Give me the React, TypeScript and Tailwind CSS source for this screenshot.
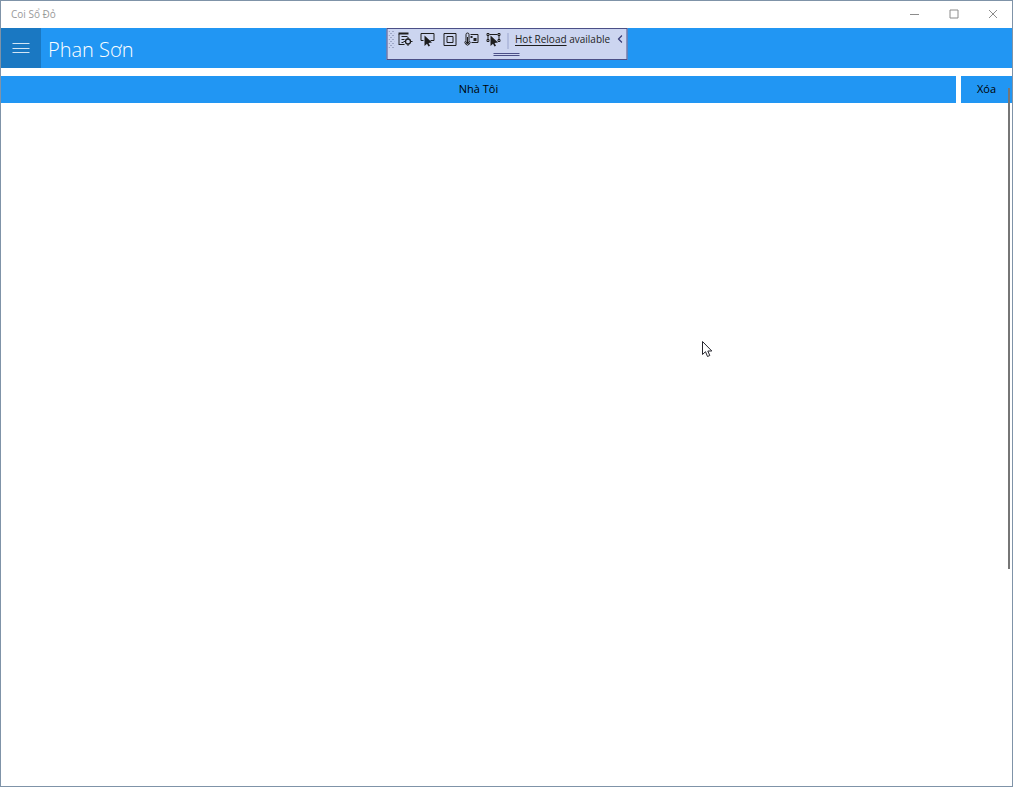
import { ComponentType, PropsWithChildren } from "react";

export default function App() {
  return (
    <div className="relative flex min-h-screen flex-col border border-[#7f93a8] bg-white font-['Open_Sans','Noto_Sans',sans-serif] text-black">
      <TitleBar />
      <NavigationBar />

      <main className="relative flex grow flex-col pt-2">
        {people.map((name) => (
          <PersonRow key={name} name={name} />
        ))}
        <div className="absolute top-5 right-0.5 h-[67%] w-0.5 bg-[#767676]" />
      </main>

      <DebugToolbar />
      <Cursor />
    </div>
  );
}

const TitleBar = () => (
  <header className="flex h-[27px] items-center justify-between pl-2.5">
    <span className="pb-0.5 text-[10px] leading-4 text-[#999999]">Coi Sổ Đỏ</span>

    <div className="flex text-[#8c8c8c]">
      {windowControls.map(({ label, path }) => (
        <button
          key={label}
          aria-label={label}
          className="flex h-[27px] w-[39px] items-center justify-center pb-0.5"
        >
          <svg
            width="10"
            height="10"
            viewBox="0 0 10 10"
            fill="none"
            stroke="currentColor"
          >
            <path d={path} />
          </svg>
        </button>
      ))}
    </div>
  </header>
);

const NavigationBar = () => (
  <nav className="flex h-10 items-center bg-[#2196f3]">
    <button
      aria-label="Menu"
      className="flex size-10 items-center justify-center bg-[#1a78c2] text-[#d3e6f5]"
    >
      <svg width="18" height="12" viewBox="0 0 18 12" stroke="currentColor">
        <path d="M0.5 1.5h17M0.5 6.5h17M0.5 10.5h17" />
      </svg>
    </button>
    <h1 className="pt-1 pl-[7px] text-xl font-light text-white">Phan Sơn</h1>
  </nav>
);

const PersonRow = ({ name }: { name: string }) => (
  <div className="flex h-[27px] gap-[5px] text-[11px]">
    <button className="grow bg-[#2196f3]">{name}</button>
    <button className="w-[51px] bg-[#2196f3]">Xóa</button>
  </div>
);

const DebugToolbar = () => (
  <div className="absolute top-[27px] left-1/2 flex h-8 w-[241px] -translate-x-1/2 border border-[#4b4f87] bg-[#ccd5f0] text-[#1e1e1e]">
    <svg className="mt-0.5 ml-px" width="6" height="18" viewBox="0 0 6 18">
      <defs>
        <pattern id="grip" width="4" height="4" patternUnits="userSpaceOnUse">
          <path d="M0 0h1v1H0zM2 2h1v1H2z" fill="#6f789c" />
        </pattern>
      </defs>
      <rect width="6" height="18" fill="url(#grip)" />
    </svg>

    <div className="ml-[3px] flex h-5 items-center gap-1.5">
      <ToolButton label="Go to Live Visual Tree">
        <path d="M1 2.5h10" strokeWidth="2" />
        <path d="M1.5 3v11M4 5.5h6M4 8.5h3M4 11.5h2M1.5 13.5H7" />
        <circle cx="10.5" cy="10.5" r="2.5" strokeWidth="1.3" />
        <path d="M10.5 6v2M10.5 13v2M6 10.5h2M13 10.5h2" />
      </ToolButton>
      <ToolButton label="Select Element">
        <path d="M4 9.5H1.5v-7h13v7H11" />
        <path d="M5 4.5V15l2.5-2.3L9 15.5l1.5-.8L9 12l3.5-.5z" fill="currentColor" stroke="none" />
      </ToolButton>
      <ToolButton label="Display Layout Adorners">
        <path d="M2.5 2.5h12v12h-12zM5.5 5.5h6v6h-6z" />
      </ToolButton>
      <ToolButton label="Track Focused Element">
        <path d="M2.5 9.5v-6a1.5 1.5 0 0 1 3 0v6a2.5 2.5 0 1 1-3 0z" />
        <path d="M4 6v5" />
        <circle cx="4" cy="11.5" r="1.5" fill="currentColor" stroke="none" />
        <path d="M7 3.5h7.5v8H8" />
        <path d="M7 5h2v2H7zM10 7h3v3h-3z" fill="currentColor" stroke="none" />
      </ToolButton>
      <ToolButton label="Preview Selection">
        <path d="M4 3.5h8M2.5 5v3M13.5 5v3" />
        <path d="M1.5 2.5h2v2h-2zM12.5 2.5h2v2h-2zM1.5 8.5h2v2h-2zM12.5 8.5h2v2h-2z" />
        <path d="M5 4.5V15l2.5-2.3L9 15.5l1.5-.8L9 12l3.5-.5z" fill="currentColor" stroke="none" />
      </ToolButton>
    </div>

    <div className="mt-1 ml-1.5 h-4 w-px bg-[#9aa5cd]" />
    <p className="ml-[7px] text-[10px] leading-5 whitespace-nowrap">
      <a href="#hot-reload" className="underline underline-offset-2">
        Hot Reload
      </a>{" "}
      available
    </p>
    <button
      aria-label="Collapse"
      className="absolute top-1.5 right-1 text-[#3b3f78]"
    >
      <svg width="5" height="8" viewBox="0 0 5 8" fill="none" stroke="currentColor">
        <path d="M4.5 0.5L1 4l3.5 3.5" strokeWidth="1.3" />
      </svg>
    </button>

    <div className="absolute bottom-[3px] left-1/2 h-[3px] w-[26px] -translate-x-1/2 border-y border-[#4b4f87]" />
  </div>
);

const ToolButton: ComponentType<PropsWithChildren<{ label: string }>> = ({
  label,
  children,
}) => (
  <button aria-label={label} className="size-4">
    <svg width="16" height="16" viewBox="0 0 16 16" fill="none" stroke="currentColor">
      {children}
    </svg>
  </button>
);

// Mouse pointer floating over the page
const Cursor = () => (
  <svg
    className="absolute top-[339px] left-[701px]"
    width="11"
    height="18"
    viewBox="0 0 11 18"
    fill="white"
    stroke="#25252d"
  >
    <path d="M0.5 1.5v13l3-2.8 2 4.8 2.3-1-2-4.5h4z" />
  </svg>
);

const people = ["Nhà Tôi"];

const windowControls = [
  { label: "Minimize", path: "M0 5.5h9" },
  { label: "Maximize", path: "M1 1h8v8H1z" },
  { label: "Close", path: "M1 1l8 8M9 1L1 9" },
];
